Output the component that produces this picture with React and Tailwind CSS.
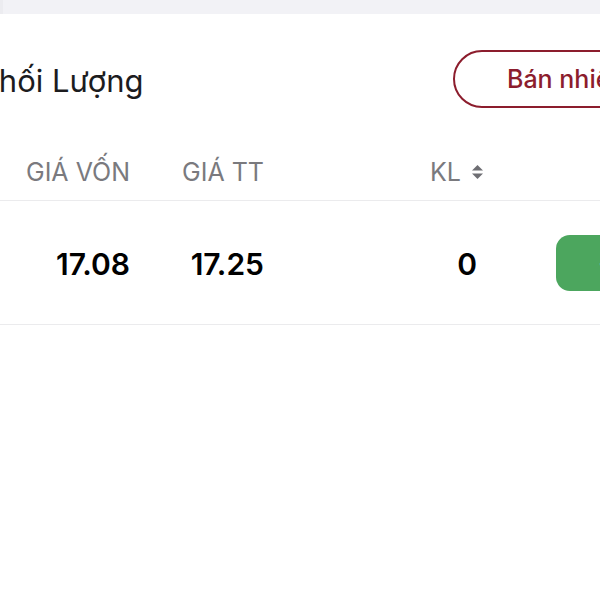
export default function App() {
  return (
    <div className="w-[600px] h-[600px] overflow-hidden bg-white font-['Inter',_'Noto_Sans',_sans-serif]">
      <div className="h-[14px] bg-[#f2f2f6] border-l-[3px] border-[#ececf0]" />
      <div className="flex items-center h-[130px] whitespace-nowrap">
        <div className="ml-[-22px] text-[31px] text-[#1c1c1e] leading-none pt-[2px]">Khối Lượng</div>
        <div className="ml-auto mr-[-113px] h-[58px] w-[260px] shrink-0 rounded-full border-2 border-[#8c1d2d] flex items-center pl-[52px]">
          <span className="text-[25px] font-medium text-[#8c1d2d] leading-none">Bán nhiều lệnh</span>
        </div>
      </div>
      <div className="flex items-center h-[57px] border-b border-[#ebebed] text-[25px] text-[#7a7a7e] leading-none whitespace-nowrap">
        <div className="w-[130px] text-right shrink-0">GIÁ VỐN</div>
        <div className="w-[134px] text-right shrink-0">GIÁ TT</div>
        <div className="w-[220px] shrink-0 flex justify-end items-center gap-[10px]">
          <span>KL</span>
          <svg width="13" height="16" viewBox="0 0 13 16" className="shrink-0">
            <path d="M6.5 1 L12 6.5 H1 Z" fill="#6e6e73" />
            <path d="M6.5 15 L12 9.5 H1 Z" fill="#6e6e73" />
          </svg>
        </div>
      </div>
      <div className="flex items-center h-[124px] border-b border-[#ebebed] text-[30px] font-semibold text-black leading-none whitespace-nowrap">
        <div className="w-[130px] text-right shrink-0 pt-[2px]">17.08</div>
        <div className="w-[134px] text-right shrink-0 pt-[2px]">17.25</div>
        <div className="w-[213px] text-right shrink-0 pt-[2px]">0</div>
        <div className="ml-[79px] h-[56px] w-[100px] shrink-0 rounded-[14px] bg-[#4ca65e] flex items-center pl-[42px]">
          <span className="text-white text-[24px] font-medium">+</span>
        </div>
      </div>
    </div>
  );
}
